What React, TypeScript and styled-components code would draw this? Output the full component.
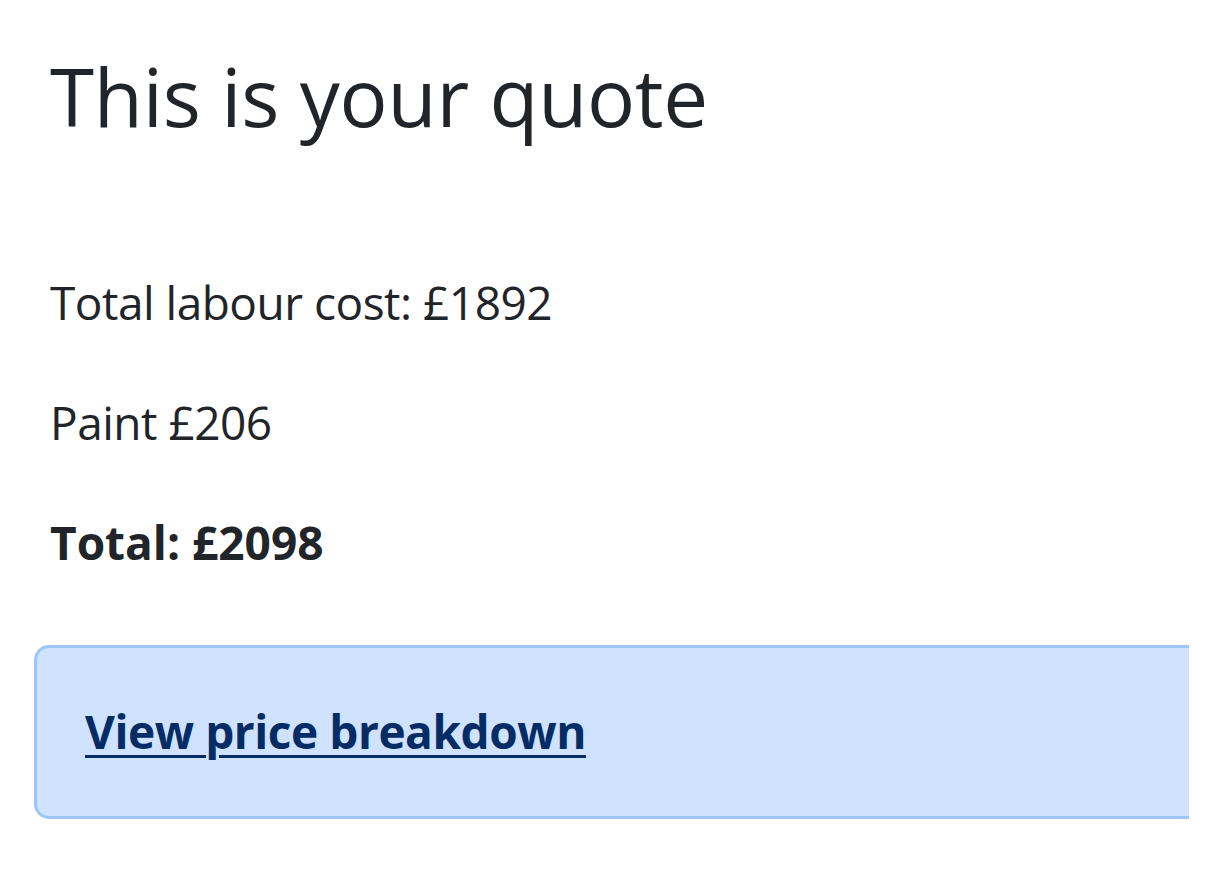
import React from 'react';
import styled, { createGlobalStyle } from 'styled-components';

const GlobalStyle = createGlobalStyle`
  body {
    margin: 0;
    background: #ffffff;
    color: #212529;
    font-family: "Open Sans", "Noto Sans", "Liberation Sans", sans-serif;
  }
`

const Page = styled.main`
  width: 1189px;
  padding: 46px 0 40px 0;
`

const Content = styled.div`
  padding-left: 50px;
`

const Title = styled.h1`
  font-size: 80px;
  font-weight: 400;
  line-height: 100px;
  letter-spacing: -0.2px;
  margin: 0 0 120px 0;
`

const Line = styled.p<{ $strong?: boolean }>`
  font-size: 46px;
  line-height: 72px;
  letter-spacing: ${(p) => (p.$strong ? '0' : '-0.5px')};
  margin: 0 0 48px 0;
  font-weight: ${(p) => (p.$strong ? 700 : 400)};
`

const Alert = styled.div`
  margin: 67px 0 0 34px;
  padding: 47px 48px 49px 48px;
  background: #cfe2ff;
  border: 3px solid #9ec5fe;
  border-right: none;
  border-radius: 15px 0 0 15px;
`

const AlertLink = styled.a`
  font-size: 46px;
  line-height: 72px;
  letter-spacing: -0.45px;
  font-weight: 700;
  color: #052c65;
  text-decoration: underline;
  text-underline-offset: 6px;
  text-decoration-thickness: 3px;
`

export default function App() {
  return (
    <>
      <GlobalStyle />
      <Page>
        <Content>
          <Title>This is your quote</Title>
          <Line>Total labour cost: £1892</Line>
          <Line>Paint £206</Line>
          <Line $strong style={{ marginBottom: 0 }}>Total: £2098</Line>
        </Content>
        <Alert>
          <AlertLink href="#">View price breakdown</AlertLink>
        </Alert>
      </Page>
    </>
  )
}
